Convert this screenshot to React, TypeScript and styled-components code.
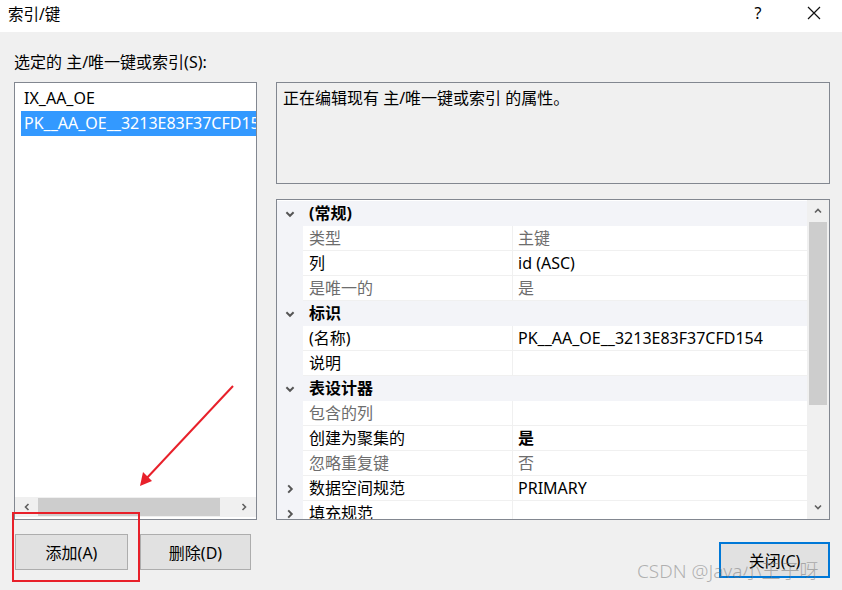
import React from "react";
import styled, { createGlobalStyle } from "styled-components";

const GlobalStyle = createGlobalStyle`
  html, body {
    margin: 0;
    padding: 0;
  }
  body {
    width: 842px;
    height: 590px;
    overflow: hidden;
    background: #f0f0f0;
    font-family: "Noto Sans", "Noto Sans CJK SC", sans-serif;
    color: #000;
  }
`;

const Window = styled.div`
  position: relative;
  width: 842px;
  height: 590px;
  display: flex;
  flex-direction: column;
  background: #f0f0f0;
  overflow: hidden;
`;

const TitleBar = styled.div`
  height: 32px;
  flex: none;
  background: #fff;
  display: flex;
  align-items: center;
  padding-left: 8px;
`;

const Title = styled.div`
  flex: 1;
  font-size: 15.5px;
  line-height: 20px;
  margin-top: -4px;
`;

const CaptionButton = styled.div`
  width: 56px;
  height: 32px;
  display: flex;
  align-items: center;
  justify-content: center;
  font-size: 16px;
  margin-top: -6px;
`;

const Body = styled.div`
  flex: 1;
  display: grid;
  grid-template-columns: 243px 554px;
  grid-template-rows: 50px 1fr;
  column-gap: 19px;
  padding: 0 12px 0 14px;
`;

const Label = styled.div`
  grid-column: 1 / span 2;
  display: flex;
  align-items: flex-end;
  padding-bottom: 11px;
  font-size: 16px;
  line-height: 18px;
`;

const Column = styled.div`
  display: flex;
  flex-direction: column;
`;

const ListBox = styled.div`
  height: 438px;
  box-sizing: border-box;
  border: 1px solid #828790;
  background: #fff;
  display: flex;
  flex-direction: column;
`;

const ListItems = styled.div`
  flex: 1;
  padding: 3px 0 0 6px;
  overflow: hidden;
`;

const ListItem = styled.div<{ $selected?: boolean }>`
  height: 25px;
  line-height: 25px;
  padding-left: 3px;
  font-size: 16px;
  white-space: nowrap;
  overflow: hidden;
  background: ${(p) => (p.$selected ? "#3399ff" : "transparent")};
  color: ${(p) => (p.$selected ? "#fff" : "#000")};
`;

const HScroll = styled.div`
  height: 20px;
  margin-bottom: 2px;
  display: flex;
  background: #f0f0f0;
`;

const ScrollArrow = styled.div<{ $w?: number; $h?: number }>`
  width: ${(p) => (p.$w ? `${p.$w}px` : "auto")};
  height: ${(p) => (p.$h ? `${p.$h}px` : "auto")};
  flex: none;
  display: flex;
  align-items: center;
  justify-content: center;
  color: #606060;
`;

const HTrack = styled.div`
  flex: 1;
  display: flex;
  align-items: stretch;
  padding: 1px 0;
`;

const HThumb = styled.div`
  width: 182px;
  background: #cdcdcd;
`;

const ButtonRow = styled.div<{ $top: number; $end?: boolean }>`
  display: flex;
  gap: 12px;
  margin-top: ${(p) => p.$top}px;
  padding-left: ${(p) => (p.$end ? 0 : 1)}px;
  justify-content: ${(p) => (p.$end ? "flex-end" : "flex-start")};
`;

const Button = styled.div<{ $default?: boolean; $w: number }>`
  width: ${(p) => p.$w}px;
  height: 36px;
  box-sizing: border-box;
  background: #e1e1e1;
  border: ${(p) => (p.$default ? "2px solid #0078d7" : "1px solid #adadad")};
  display: flex;
  align-items: center;
  justify-content: center;
  font-size: 16px;
`;

const Description = styled.div`
  height: 102px;
  box-sizing: border-box;
  border: 1px solid #828790;
  background: #f0f0f0;
  padding: 4px 6px;
  font-size: 16px;
  line-height: 22px;
`;

const PropertyGrid = styled.div`
  margin-top: 15px;
  height: 321px;
  box-sizing: border-box;
  border: 1px solid #828790;
  background: #fff;
  display: flex;
`;

const Rows = styled.div`
  flex: 1;
  padding-top: 1px;
  overflow: hidden;
  background: #fff;
`;

const Row = styled.div<{ $category?: boolean }>`
  height: 25px;
  display: grid;
  grid-template-columns: 26px 210px 1fr;
  font-size: 16px;
  line-height: 24px;
  background: ${(p) => (p.$category ? "#f3f4f8" : "#fff")};
`;

const Gutter = styled.div`
  background: #f3f4f8;
  display: flex;
  align-items: center;
  justify-content: center;
  color: #555;
`;

const NameCell = styled.div<{ $dim?: boolean; $bold?: boolean; $wide?: boolean }>`
  grid-column: ${(p) => (p.$wide ? "2 / span 2" : "auto")};
  padding-left: 6px;
  border-bottom: 1px solid ${(p) => (p.$wide ? "transparent" : "#f0f0f0")};
  border-right: ${(p) => (p.$wide ? "none" : "1px solid #f0f0f0")};
  color: ${(p) => (p.$dim ? "#6d6d6d" : "#000")};
  font-weight: ${(p) => (p.$bold ? 700 : 400)};
  white-space: nowrap;
  overflow: hidden;
`;

const ValueCell = styled.div<{ $dim?: boolean; $bold?: boolean }>`
  padding-left: 5px;
  border-bottom: 1px solid #f0f0f0;
  color: ${(p) => (p.$dim ? "#6d6d6d" : "#000")};
  font-weight: ${(p) => (p.$bold ? 700 : 400)};
  white-space: nowrap;
  overflow: hidden;
`;

const VScroll = styled.div`
  width: 22px;
  flex: none;
  display: flex;
  flex-direction: column;
  background: #f0f0f0;
`;

const VTrack = styled.div`
  flex: 1;
  padding: 0 2px;
  display: flex;
  flex-direction: column;
`;

const VThumb = styled.div`
  height: 183px;
  background: #cdcdcd;
`;

const Watermark = styled.div`
  position: absolute;
  left: 637px;
  top: 559px;
  font-size: 19px;
  line-height: 24px;
  color: rgba(110, 110, 110, 0.5);
  font-family: "Noto Sans", "Noto Sans CJK SC", sans-serif;
  font-weight: 300;
  white-space: nowrap;
  pointer-events: none;
`;

const Highlight = styled.div`
  position: absolute;
  left: 12px;
  top: 512px;
  width: 128px;
  height: 70px;
  box-sizing: border-box;
  border: 2px solid #e8202a;
  pointer-events: none;
`;

const ArrowLayer = styled.svg`
  position: absolute;
  left: 0;
  top: 0;
  pointer-events: none;
`;

const Chevron = ({ dir, size = 10 }: { dir: "up" | "down" | "left" | "right"; size?: number }) => {
  const pts = {
    down: "2,3.5 5,6.5 8,3.5",
    up: "2,6.5 5,3.5 8,6.5",
    left: "6.5,2 3.5,5 6.5,8",
    right: "3.5,2 6.5,5 3.5,8",
  }[dir];
  return (
    <svg width={size} height={size} viewBox="0 0 10 10">
      <polyline points={pts} fill="none" stroke="currentColor" strokeWidth="1.6" />
    </svg>
  );
};

type Prop = {
  name: string;
  value?: string;
  category?: boolean;
  dim?: boolean;
  boldValue?: boolean;
  expandable?: boolean;
};

const props: Prop[] = [
  { name: "(常规)", category: true },
  { name: "类型", value: "主键", dim: true },
  { name: "列", value: "id (ASC)" },
  { name: "是唯一的", value: "是", dim: true },
  { name: "标识", category: true },
  { name: "(名称)", value: "PK__AA_OE__3213E83F37CFD154" },
  { name: "说明", value: "" },
  { name: "表设计器", category: true },
  { name: "包含的列", value: "", dim: true },
  { name: "创建为聚集的", value: "是", boldValue: true },
  { name: "忽略重复键", value: "否", dim: true },
  { name: "数据空间规范", value: "PRIMARY", expandable: true },
  { name: "填充规范", value: "", expandable: true },
];

const App: React.FC = () => {
  return (
    <Window>
      <GlobalStyle />
      <TitleBar>
        <Title>索引/键</Title>
        <CaptionButton>?</CaptionButton>
        <CaptionButton>
          <svg width="14" height="14" viewBox="0 0 14 14">
            <path d="M1 1 L13 13 M13 1 L1 13" stroke="#111" strokeWidth="1.2" />
          </svg>
        </CaptionButton>
      </TitleBar>

      <Body>
        <Label>选定的 主/唯一键或索引(S):</Label>

        <Column>
          <ListBox>
            <ListItems>
              <ListItem>IX_AA_OE</ListItem>
              <ListItem $selected>PK__AA_OE__3213E83F37CFD154</ListItem>
            </ListItems>
            <HScroll>
              <ScrollArrow $w={23}>
                <Chevron dir="left" />
              </ScrollArrow>
              <HTrack>
                <HThumb />
              </HTrack>
              <ScrollArrow $w={24}>
                <Chevron dir="right" />
              </ScrollArrow>
            </HScroll>
          </ListBox>
          <ButtonRow $top={14}>
            <Button $w={113}>添加(A)</Button>
            <Button $w={111}>删除(D)</Button>
          </ButtonRow>
        </Column>

        <Column>
          <Description>正在编辑现有 主/唯一键或索引 的属性。</Description>
          <PropertyGrid>
            <Rows>
              {props.map((p) => (
                <Row key={p.name} $category={p.category}>
                  <Gutter>
                    {p.category && <Chevron dir="down" size={12} />}
                    {p.expandable && <Chevron dir="right" size={12} />}
                  </Gutter>
                  {p.category ? (
                    <NameCell $bold $wide>
                      {p.name}
                    </NameCell>
                  ) : (
                    <>
                      <NameCell $dim={p.dim}>{p.name}</NameCell>
                      <ValueCell $dim={p.dim} $bold={p.boldValue}>
                        {p.value}
                      </ValueCell>
                    </>
                  )}
                </Row>
              ))}
            </Rows>
            <VScroll>
              <ScrollArrow $h={22}>
                <Chevron dir="up" />
              </ScrollArrow>
              <VTrack>
                <VThumb />
              </VTrack>
              <ScrollArrow $h={24}>
                <Chevron dir="down" />
              </ScrollArrow>
            </VScroll>
          </PropertyGrid>
          <ButtonRow $top={22} $end>
            <Button $default $w={111}>
              关闭(C)
            </Button>
          </ButtonRow>
        </Column>
      </Body>

      <Highlight />
      <ArrowLayer width="842" height="590">
        <line x1="233" y1="386" x2="145" y2="480" stroke="#e8202a" strokeWidth="2" />
        <polygon points="140,486 143,472 152,481" fill="#e8202a" />
      </ArrowLayer>
      <Watermark>CSDN @Java小王子呀</Watermark>
    </Window>
  );
};

export default App;
